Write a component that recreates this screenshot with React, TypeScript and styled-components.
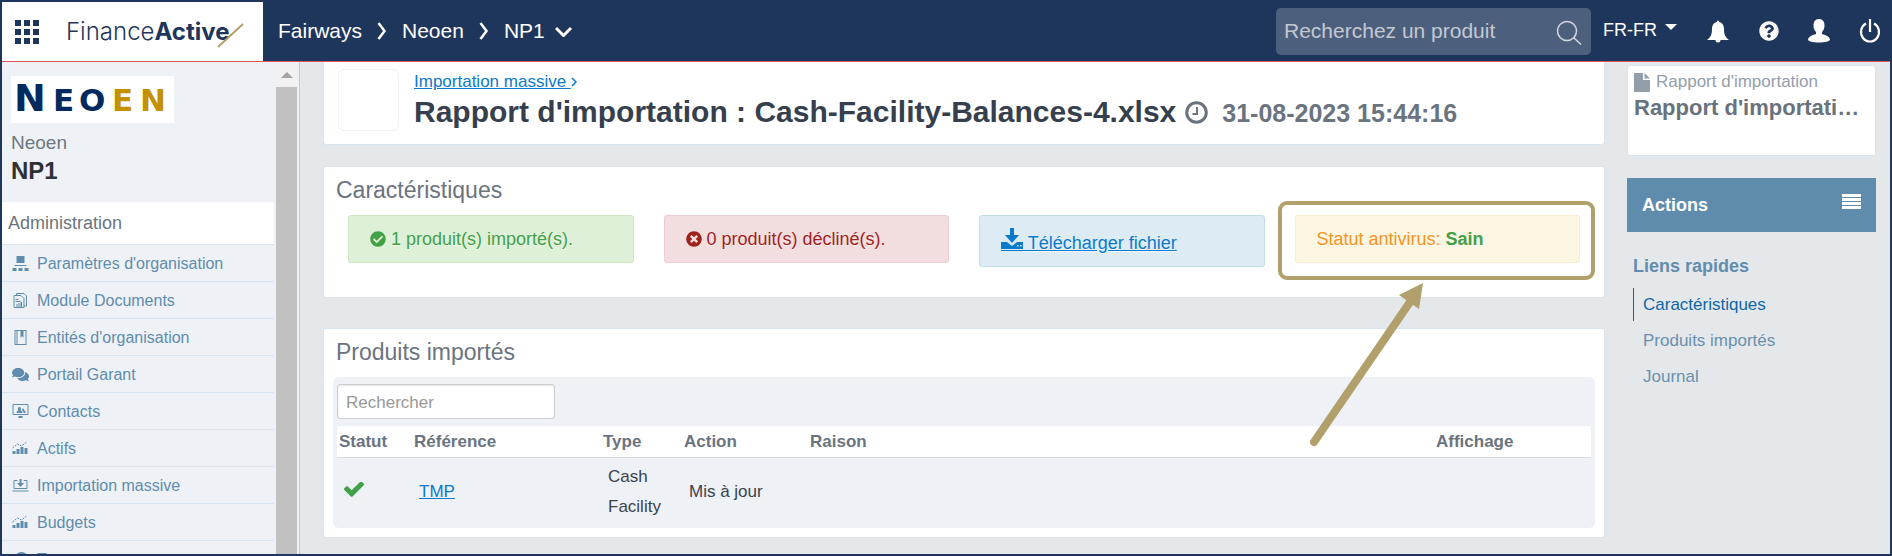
import React from 'react';
import styled, { createGlobalStyle, css } from 'styled-components';
import { FaQuestionCircle, FaCheckCircle, FaTimesCircle, FaComments } from 'react-icons/fa';

const sans = '"Liberation Sans", Arial, sans-serif';
const navy = '#1f365c';
const steel = '#5f8cac';
const link = '#0a7acd';
const line = '#d8e4ef';
const gold = '#b1a06b';
const green = '#43a047';

const GlobalStyle = createGlobalStyle`
  * { box-sizing: border-box; }
  html, body { margin: 0; padding: 0; height: 100%; }
  #root { height: 100%; }
  body { font: 17px/20px ${sans}; color: #3b424d; background: #e4e8eb; }
  svg { display: block; flex: none; }
`;

const Shell = styled.div`
  height: 100vh;
  display: flex;
  flex-direction: column;
  overflow: hidden;
  border: 2px solid ${navy};
`;

const TopBar = styled.header`
  flex: none;
  height: 60px;
  display: flex;
  align-items: center;
  background: ${navy};
  border-bottom: 1px solid #e2545c;
  color: #fff;
`;

const Brand = styled.div`
  width: 261px;
  align-self: stretch;
  display: flex;
  align-items: center;
  gap: 25px;
  padding-left: 13px;
  background: #fff;
`;

const IconButton = styled.button`
  display: flex;
  padding: 0;
  border: 0;
  background: none;
  color: inherit;
  cursor: pointer;
`;

const Crumbs = styled.nav`
  flex: 1;
  display: flex;
  align-items: center;
  gap: 15px;
  padding: 0 0 2px 15px;
  font-size: 21px;
  line-height: 24px;
`;

const Crumb = styled.a`
  display: flex;
  align-items: center;
  gap: 10px;
  color: #fff;
  text-decoration: none;
`;

const Search = styled.form`
  width: 315px;
  height: 47px;
  display: flex;
  align-items: center;
  padding: 0 9px 0 8px;
  border-radius: 5px;
  background: #4c5f7c;
`;

const SearchInput = styled.input`
  flex: 1;
  min-width: 0;
  padding: 0 0 2px;
  border: 0;
  outline: 0;
  background: none;
  color: #fff;
  font: 21px/24px ${sans};
  &::placeholder { color: #c3c9d2; opacity: 1; }
`;

const Language = styled.button`
  width: 103px;
  margin-left: 12px;
  padding: 0 0 3px;
  display: flex;
  align-items: center;
  gap: 8px;
  border: 0;
  background: none;
  color: #fff;
  font: 18px/20px ${sans};
`;

const Tools = styled.div`
  display: flex;
  align-items: center;
  gap: 29px;
  padding: 0 9px 2px 0;
`;

const Body = styled.div`
  flex: 1;
  min-height: 0;
  display: flex;
`;

const Sidebar = styled.aside`
  flex: none;
  width: 298px;
  display: flex;
  overflow: hidden;
  background: #eef2f7;
  border-right: 1px solid #c6c9cc;
`;

const SideContent = styled.div`
  width: 272px;
`;

const Entity = styled.div`
  height: 140px;
  padding: 14px 9px 0;
`;

const LogoBox = styled.div`
  width: 163px;
  height: 47px;
  margin-bottom: 9px;
  background: #fff;
`;

const Group = styled.div`
  color: #6d7780;
  font-size: 19px;
  line-height: 22px;
`;

const Company = styled.div`
  margin-top: 3px;
  color: #2e3033;
  font-size: 24px;
  line-height: 28px;
  font-weight: bold;
`;

const MenuTitle = styled.h2`
  height: 43px;
  margin: 0;
  padding: 10px 6px;
  border-bottom: 1px solid ${line};
  background: #fff;
  color: #6b747d;
  font-size: 18px;
  line-height: 22px;
  font-weight: normal;
`;

const MenuList = styled.ul`
  margin: 0;
  padding: 0;
  list-style: none;
`;

const MenuItem = styled.a`
  height: 37px;
  display: flex;
  align-items: center;
  gap: 8px;
  padding: 1px 10px 0;
  border-bottom: 1px solid ${line};
  color: ${steel};
  font-size: 16px;
  text-decoration: none;
`;

const Scrollbar = styled.div`
  width: 21px;
  margin-left: 2px;
  display: flex;
  flex-direction: column;
  align-items: center;
  background: #f1f1f1;
`;

const ScrollUp = styled.div`
  height: 25px;
  padding-top: 10px;
`;

const Thumb = styled.div`
  flex: 1;
  align-self: stretch;
  background: #c1c1c1;
`;

const Main = styled.main`
  flex: 1;
  min-width: 0;
  padding: 0 22px 0 23px;
`;

const Card = styled.section`
  position: relative;
  background: #fff;
  border: 1px solid ${line};
  border-radius: 3px;
`;

const TitleCard = styled(Card)`
  height: 83px;
  margin-bottom: 21px;
  padding: 7px 14px;
  display: flex;
  gap: 15px;
  border-top: 0;
  border-radius: 0 0 3px 3px;
`;

const Avatar = styled.div`
  width: 61px;
  height: 62px;
  border: 1px solid #f1f2f3;
  border-radius: 6px;
`;

const Heading = styled.div`
  padding-top: 3px;
`;

const BackLink = styled.a`
  display: inline-flex;
  align-items: center;
  color: ${link};
  text-decoration: none;
  white-space: pre;
`;

const Underlined = styled.span`
  text-decoration: underline;
`;

const PageTitle = styled.h1`
  margin: 3px 0 0;
  display: flex;
  align-items: baseline;
  gap: 9px;
  color: #363f4d;
  font-size: 30px;
  line-height: 34px;
  white-space: nowrap;
`;

const Stamp = styled.span`
  color: #6a747f;
  font-size: 25px;
`;

const Clock = styled.svg`
  display: inline-block;
  margin-right: 14px;
  vertical-align: -2px;
`;

const SummaryCard = styled(Card)`
  height: 132px;
  margin-bottom: 30px;
  padding: 10px 24px;
`;

const CardTitle = styled.h2`
  margin: 0;
  color: #6a747f;
  font-size: 23px;
  line-height: 26px;
  font-weight: normal;
`;

const SummaryTitle = styled(CardTitle)`
  margin: 0 0 12px -12px;
`;

const Alerts = styled.div`
  display: flex;
  align-items: flex-start;
  gap: 30px;
`;

const tones = {
  success: css`background: #dff0d8; border-color: #cfe6bf; color: ${green};`,
  danger: css`background: #f2dede; border-color: #ebccd1; color: #a1221c;`,
  info: css`background: #ddecf4; border-color: #bfdfe6; color: ${link};`,
  warning: css`background: #fdf6e3; border-color: #faecd0; color: #f8941d;`,
};

const Alert = styled.div<{ $tone: keyof typeof tones }>`
  flex: 1 1 0;
  min-width: 0;
  position: relative;
  display: flex;
  align-items: center;
  gap: 5px;
  padding: 12px 21px;
  border: 1px solid;
  border-radius: 3px;
  font-size: 18px;
  line-height: 22px;
  text-shadow: 0 1px 0 rgba(255, 255, 255, 0.5);
  ${(p) => tones[p.$tone]}
`;

const Download = styled.a`
  display: flex;
  align-items: baseline;
  color: ${link};
  text-decoration: underline;
  white-space: pre;
  svg { overflow: visible; }
`;

const Sane = styled.strong`
  color: ${green};
`;

const Highlight = styled.div`
  position: absolute;
  inset: -15px -16px -18px -18px;
  border: 4px solid ${gold};
  border-radius: 9px;
`;

const Pointer = styled.svg`
  position: absolute;
  top: 66px;
  left: 12px;
  z-index: 1;
`;

const TableCard = styled(Card)`
  padding: 10px 9px 9px;
`;

const TableTitle = styled(CardTitle)`
  margin: 0 0 12px 3px;
`;

const TablePanel = styled.div`
  padding: 7px 4px 0;
  border-radius: 6px;
  background: #eef1f6;
`;

const Filter = styled.input`
  width: 218px;
  height: 35px;
  display: block;
  margin-bottom: 7px;
  padding: 2px 8px 0;
  border: 1px solid #c9ccd0;
  border-radius: 3px;
  background: #fff;
  box-shadow: inset 0 1px 2px rgba(0, 0, 0, 0.1);
  font: 17px/20px ${sans};
  &::placeholder { color: #999; opacity: 1; }
`;

const Table = styled.table`
  width: 100%;
  border-collapse: separate;
  border-spacing: 0;
  table-layout: fixed;
`;

const Th = styled.th<{ $w?: number }>`
  width: ${(p) => (p.$w ? `${p.$w}px` : 'auto')};
  height: 32px;
  padding: 0 2px;
  border-bottom: 1px solid #d6d9dc;
  background: #fff;
  color: #6a747f;
  text-align: left;
`;

const Td = styled.td`
  padding: 4px 7px 6px;
  line-height: 30px;
`;

const RowLink = styled.a`
  color: ${link};
`;

const Rail = styled.aside`
  flex: none;
  width: 263px;
  padding: 3px 14px 0 0;
`;

const DocCard = styled(Card)`
  height: 91px;
  margin-bottom: 22px;
  padding: 6px 8px 0 6px;
`;

const DocType = styled.div`
  display: flex;
  align-items: center;
  gap: 6px;
  color: #939eab;
`;

const DocTitle = styled.div`
  margin-top: 3px;
  overflow: hidden;
  text-overflow: ellipsis;
  white-space: nowrap;
  color: #68727d;
  font-size: 22px;
  line-height: 26px;
  font-weight: bold;
`;

const Actions = styled.button`
  width: 100%;
  height: 54px;
  display: flex;
  align-items: center;
  justify-content: space-between;
  padding: 0 15px;
  border: 0;
  background: #5f8cac;
  color: #fff;
  font: bold 18px/22px ${sans};
`;

const QuickLinks = styled.nav`
  display: flex;
  flex-direction: column;
  gap: 3px;
  padding: 23px 0 0 6px;
`;

const QuickTitle = styled.h3`
  margin: 0 0 8px;
  color: #628dae;
  font-size: 18px;
  line-height: 22px;
`;

const QuickLink = styled.a<{ $active?: boolean }>`
  padding: 7px 9px 6px;
  border-left: 1px solid ${(p) => (p.$active ? '#0f66a8' : 'transparent')};
  color: ${(p) => (p.$active ? '#0f66a8' : '#6a90ae')};
  text-decoration: none;
`;

const Chevron = () => (
  <svg width="10" height="18" viewBox="0 0 10 18" fill="none" stroke="#fff" strokeWidth="2.500" aria-hidden="true">
    <path d="M1.500 1l6 8-6 8" />
  </svg>
);

const FinanceLogo = () => (
  <svg width="180" height="36" viewBox="0 0 180 36" role="img" aria-label="FinanceActive">
    <text x="0" y="26" fontFamily="Inter, sans-serif" fontSize="24" fill={navy}>
      <tspan fontWeight="300">Finance</tspan>
      <tspan fontWeight="700">Active</tspan>
    </text>
    <path d="M152 33L177 10" stroke={gold} strokeWidth="2" />
  </svg>
);

const NeoenLogo = () => (
  <svg width="163" height="47" viewBox="0 0 163 47" role="img" aria-label="Neoen">
    <g fontFamily="'DejaVu Sans', sans-serif" fontWeight="700">
      <text x="3" y="35" fill="#032a5e" fontSize="38">N</text>
      <text x="42" y="35" fill="#032a5e" fontSize="31">E</text>
      <text x="68" y="35" fill="#032a5e" fontSize="31">O</text>
      <text x="101" y="35" fill="#c39000" fontSize="31">E</text>
      <text x="129" y="35" fill="#c39000" fontSize="31">N</text>
    </g>
  </svg>
);

const shapes = {
  org: <path d="M4 0h8v7H4zM2 9h12v1H2zM0 12h4v3H0zM6 12h4v3H6zM12 12h4v3h-4z" />,
  docs: (
    <>
      <path d="M1.500 2.500h7l3 3v9h-10zM4 2.500v-2h7.500l2.500 2.500v10h-2.500" fill="none" stroke="currentColor" />
      <path d="M3 6h3v1H3zM3 8h5v1H3zM4 11h1v3H4zM6 10h1v4H6zM8 9h1.500v5H8z" />
    </>
  ),
  book: <path d="M2 0h12v15H2zM5 1v13h8V1h-2v7L9.500 6 8 8V1zM3 1v13h1V1z" fillRule="evenodd" />,
  contacts: (
    <>
      <path d="M.5.500h15v10H.5z" fill="none" stroke="currentColor" />
      <path d="M4 9c0-2 1-2 2-2.500C5 5 5.500 3 7 3s2 2 1 3.500C9 7 10 7 10 9zM10 6c-1-2 2-2 1.500 0 1 .5 1.500 1 1.500 3h-2c0-1.500-.5-2-1.500-2.500zM6 12h4v2H6z" />
    </>
  ),
  chart: (
    <>
      <path d="M0 10h3v3H0zM4 8h3v5H4zM8 6h3v7H8zM12 7h3v6h-3z" />
      <path d="M0 7l5-4 4 2 5-4" fill="none" stroke="currentColor" strokeDasharray="2 1" />
    </>
  ),
  inbox: (
    <>
      <path d="M5 2.500H1.500v8h13v-8H11M0 13h16" fill="none" stroke="currentColor" />
      <path d="M7 1h2v4h2.500L8 9 4.500 5H7z" />
    </>
  ),
  clock: <circle cx="9" cy="7" r="6" fill="none" stroke="currentColor" strokeWidth="2" />,
};

const MenuIcon = ({ name }: { name: keyof typeof shapes }) => (
  <svg width="17" height="15" viewBox="0 0 16 15" fill="currentColor" aria-hidden="true">{shapes[name]}</svg>
);

const menu: { label: string; icon: keyof typeof shapes | 'chat' }[] = [
  { label: "Paramètres d'organisation", icon: 'org' },
  { label: 'Module Documents', icon: 'docs' },
  { label: "Entités d'organisation", icon: 'book' },
  { label: 'Portail Garant', icon: 'chat' },
  { label: 'Contacts', icon: 'contacts' },
  { label: 'Actifs', icon: 'chart' },
  { label: 'Importation massive', icon: 'inbox' },
  { label: 'Budgets', icon: 'chart' },
  { label: 'Taux', icon: 'clock' },
];

export default function App() {
  return (
    <Shell>
      <GlobalStyle />
      <TopBar>
        <Brand>
          <IconButton aria-label="Applications">
            <svg width="26" height="26" viewBox="0 0 26 26" fill={navy}>
              {[1, 10, 19].map((y) => [0, 9, 18].map((x) => <rect key={`${x}-${y}`} x={x} y={y} width="6" height="6" />))}
            </svg>
          </IconButton>
          <FinanceLogo />
        </Brand>
        <Crumbs aria-label="Fil d'Ariane">
          <Crumb href="#">Fairways</Crumb>
          <Chevron />
          <Crumb href="#">Neoen</Crumb>
          <Chevron />
          <Crumb href="#">
            NP1
            <svg width="17" height="12" viewBox="0 0 17 12" fill="none" stroke="#fff" strokeWidth="3" aria-hidden="true">
              <path d="M1 3l7.500 7.500L16 3" />
            </svg>
          </Crumb>
        </Crumbs>
        <Search role="search">
          <SearchInput aria-label="Recherchez un produit" placeholder="Recherchez un produit" />
          <IconButton type="button" aria-label="Lancer la recherche">
            <svg width="26" height="26" viewBox="0 0 26 26" fill="none" stroke="#d5dae1" strokeWidth="1.500">
              <circle cx="11" cy="12" r="9.500" />
              <path d="M17.500 18.500l7.500 7" />
            </svg>
          </IconButton>
        </Search>
        <Language>
          FR-FR
          <svg width="12" height="12" viewBox="0 0 12 12" fill="#fff"><path d="M0 0h12L6 6z" /></svg>
        </Language>
        <Tools>
          <IconButton aria-label="Notifications">
            <svg width="24" height="24" viewBox="0 0 24 24" fill="#fff">
              <path d="M11 2a1.500 1.500 0 0 1 2 0v1c3.500.700 5 3.500 5 7 0 5.500 1.500 8.500 5 11H1c3.500-2.500 5-5.500 5-11 0-3.500 1.500-6.300 5-7zM9.500 21h5a2.500 2.500 0 0 1-5 0z" />
            </svg>
          </IconButton>
          <IconButton aria-label="Aide"><FaQuestionCircle size={20} /></IconButton>
          <IconButton aria-label="Compte">
            <svg width="22" height="24" viewBox="0 0 22 24" fill="#fff">
              <path d="M11 0c4 0 5.500 3 5.500 6.500 0 3-1 5-2.500 6.500v2c3 1 7 2 8 5.500 0 2-5 3-11 3s-11-1-11-3C1 17 5 16 8 15v-2C6.500 11.500 5.500 9.500 5.500 6.500 5.500 3 7 0 11 0z" />
            </svg>
          </IconButton>
          <IconButton aria-label="Déconnexion">
            <svg width="22" height="24" viewBox="0 0 22 24" fill="none" stroke="#fff" strokeWidth="2.200">
              <path d="M7 4.500a9 9.500 0 1 0 8 0M11 0v13" />
            </svg>
          </IconButton>
        </Tools>
      </TopBar>
      <Body>
        <Sidebar>
          <SideContent>
            <Entity>
              <LogoBox><NeoenLogo /></LogoBox>
              <Group>Neoen</Group>
              <Company>NP1</Company>
            </Entity>
            <MenuTitle>Administration</MenuTitle>
            <MenuList>
              {menu.map((m) => (
                <li key={m.label}>
                  <MenuItem href="#">
                    {m.icon === 'chat' ? <FaComments size={17} /> : <MenuIcon name={m.icon} />}
                    {m.label}
                  </MenuItem>
                </li>
              ))}
            </MenuList>
          </SideContent>
          <Scrollbar>
            <ScrollUp>
              <svg width="12" height="6" viewBox="0 0 12 6" fill="#a3a3a3"><path d="M6 0l6 6H0z" /></svg>
            </ScrollUp>
            <Thumb />
          </Scrollbar>
        </Sidebar>
        <Main>
          <TitleCard as="header">
            <Avatar />
            <Heading>
              <BackLink href="#">
                <Underlined>Importation massive </Underlined>
                <svg width="6" height="10" viewBox="0 0 6 10" fill="none" stroke={link} strokeWidth="1.500"><path d="M1 1l4 4-4 4" /></svg>
              </BackLink>
              <PageTitle>
                Rapport d'importation : Cash-Facility-Balances-4.xlsx
                <Stamp>
                  <Clock width="23" height="23" viewBox="0 0 23 23" fill="none" stroke="currentColor">
                    <circle cx="11.500" cy="11.500" r="9.800" strokeWidth="3" />
                    <path d="M12 6v7H7.500" strokeWidth="2" />
                  </Clock>
                  31-08-2023 15:44:16
                </Stamp>
              </PageTitle>
            </Heading>
          </TitleCard>
          <SummaryCard>
            <SummaryTitle>Caractéristiques</SummaryTitle>
            <Alerts>
              <Alert $tone="success"><FaCheckCircle size={16} />1 produit(s) importé(s).</Alert>
              <Alert $tone="danger"><FaTimesCircle size={16} />0 produit(s) décliné(s).</Alert>
              <Alert $tone="info">
                <Download href="#">
                  <svg width="22" height="21" viewBox="0 0 22 21" fill="currentColor" aria-hidden="true">
                    <path d="M9 0h4v7h5l-7 8-7-8h5z" />
                    <path d="M0 14h6l5 4 5-4h6v7H0zM16 17v1.500h1.500V17zM19 17v1.500h1.500V17z" fillRule="evenodd" />
                    <path d="M0 22h22v1H0z" />
                  </svg>
                  {' Télécharger fichier'}
                </Download>
              </Alert>
              <Alert $tone="warning">
                <span>Statut antivirus: <Sane>Sain</Sane></span>
                <Highlight />
                <Pointer width="118" height="168" viewBox="0 0 118 168" aria-hidden="true">
                  <path d="M6 160L102 20" stroke={gold} strokeWidth="8" strokeLinecap="round" />
                  <path d="M115 1L91 13l20 14z" fill={gold} />
                </Pointer>
              </Alert>
            </Alerts>
          </SummaryCard>
          <TableCard>
            <TableTitle>Produits importés</TableTitle>
            <TablePanel>
              <Filter aria-label="Rechercher" placeholder="Rechercher" />
              <Table>
                <thead>
                  <tr>
                    <Th $w={75}>Statut</Th>
                    <Th $w={189}>Référence</Th>
                    <Th $w={81}>Type</Th>
                    <Th $w={126}>Action</Th>
                    <Th>Raison</Th>
                    <Th $w={157}>Affichage</Th>
                  </tr>
                </thead>
                <tbody>
                  <tr>
                    <Td>
                      <svg width="20" height="20" viewBox="121 394 1550 1508" fill={green} role="img" aria-label="Importé">
                        <path d="M1671 566q0 40-28 68l-724 724-136 136q-28 28-68 28t-68-28l-136-136-362-362q-28-28-28-68t28-68l136-136q28-28 68-28t68 28l294 295 656-657q28-28 68-28t68 28l136 136q28 28 28 68z" />
                      </svg>
                    </Td>
                    <Td><RowLink href="#">TMP</RowLink></Td>
                    <Td>Cash Facility</Td>
                    <Td>Mis à jour</Td>
                    <Td />
                    <Td />
                  </tr>
                </tbody>
              </Table>
            </TablePanel>
          </TableCard>
        </Main>
        <Rail>
          <DocCard>
            <DocType>
              <svg width="16" height="19" viewBox="0 0 16 19" fill="currentColor" aria-hidden="true">
                <path d="M0 0h9v7h7v12H0zM10.500 0L16 5.500h-5.500z" />
              </svg>
              Rapport d'importation
            </DocType>
            <DocTitle>Rapport d'importation : Cash-Facility-Balances-4.xlsx</DocTitle>
          </DocCard>
          <Actions>
            Actions
            <svg width="19" height="22" viewBox="0 0 19 22" fill="#fff"><path d="M0 0h19v3H0zM0 4h19v3H0zM0 8h19v3H0zM0 12h19v3H0z" /></svg>
          </Actions>
          <QuickLinks>
            <QuickTitle>Liens rapides</QuickTitle>
            <QuickLink href="#" $active>Caractéristiques</QuickLink>
            <QuickLink href="#">Produits importés</QuickLink>
            <QuickLink href="#">Journal</QuickLink>
          </QuickLinks>
        </Rail>
      </Body>
    </Shell>
  );
}
